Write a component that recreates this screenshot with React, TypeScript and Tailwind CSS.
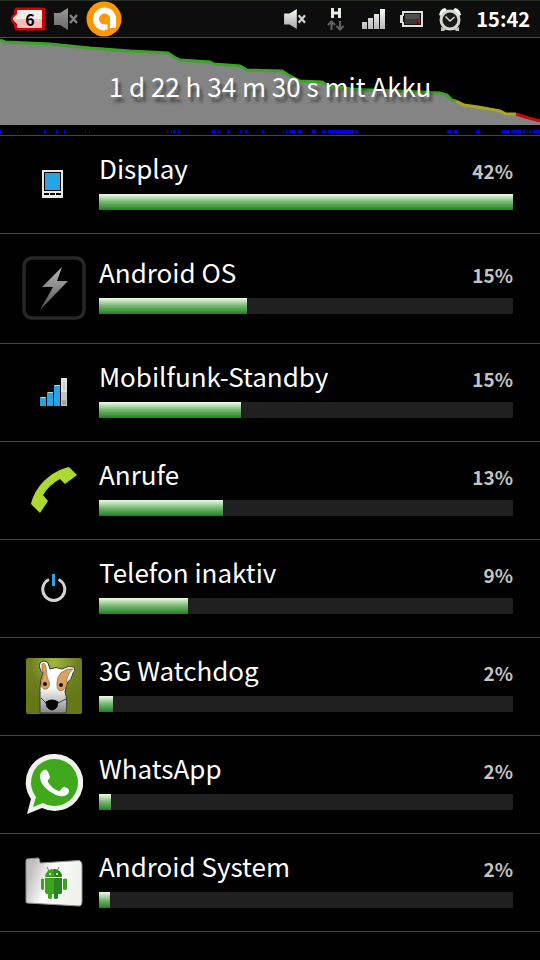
import type { ReactNode } from "react";

const FONT = "font-['Noto_Sans_CJK_SC','Noto_Sans',sans-serif]";

function MutedIcon({ className, id }: { className: string; id: string }) {
  return (
    <svg viewBox="0 0 24 22" className={className} aria-hidden="true">
      <defs>
        <linearGradient id={id} x1="0" y1="0" x2="0" y2="1">
          <stop offset="0" stopColor="#f4f8f0" />
          <stop offset="1" stopColor="#a8a8a8" />
        </linearGradient>
      </defs>
      <path d="M0 5h6l8-5v22l-8-5H0z" fill={`url(#${id})`} />
      <path d="M16 7l7 8M23 7l-7 8" stroke="#d0d0d0" strokeWidth="2.500" />
    </svg>
  );
}

function StatusBar() {
  return (
    <header className="flex h-[38px] items-center justify-between border-t border-b border-t-[#242c24] border-b-[#4a4a4a] bg-[#0d0d0d] px-[10px]">
      <div className="flex items-center">
        <div className="grid h-7 w-9 items-center">
          <svg viewBox="0 0 36 24" className="col-start-1 row-start-1 h-6 w-9" aria-hidden="true">
            <path d="M7 0.500h26q2.500 0 2.500 2.500v18q0 2.500-2.500 2.500H7q-2 0-3-3v-3L1 14v-4l3-3.500v-3q1-3 3-3z" fill="#c80404" />
            <path d="M8 3h23q1 0 1 1v8H3V11l4-4V4z" fill="#eceee8" />
            <path d="M3 12h29v8q0 1-1 1H8l-1-1v-3l-4-4z" fill="#ffbcbc" />
          </svg>
          <span className="col-start-1 row-start-1 pl-1 text-center text-base leading-7 font-bold text-black">6</span>
        </div>
        <MutedIcon id="muteLeft" className="ml-2 h-[22px] w-6 opacity-60" />
        <svg viewBox="0 0 36 36" className="ml-2 h-9 w-9" aria-hidden="true">
          <circle cx="18" cy="18" r="17.500" fill="#ff9804" />
          <path d="M19 26.500A8.500 8.500 0 1 1 27 18V27" fill="none" stroke="#fff" strokeWidth="6" />
          <path d="M18 23.500h3.500v5H18z" fill="#fff" />
          <circle cx="19" cy="18" r="5" fill="#ff9804" />
        </svg>
      </div>
      <div className="flex items-center">
        <MutedIcon id="muteRight" className="h-5 w-6" />
        <svg viewBox="0 0 18 24" className="ml-5 h-6 w-[18px]" aria-hidden="true">
          <path d="M5.500 1v10M12.500 1v10M5 6h7" stroke="#e8ece4" strokeWidth="3" fill="none" />
          <path d="M4.500 23v-8M1 18l3.500-3.500L8 18M13 14v8M9.500 19l3.500 3.500 3.500-3.500" stroke="#626262" strokeWidth="2" fill="none" />
        </svg>
        <svg viewBox="0 0 24 20" className="ml-[17px] h-5 w-6" aria-hidden="true">
          <defs>
            <linearGradient id="bars" x1="0" y1="0" x2="0" y2="1">
              <stop offset="0" stopColor="#f6faf2" />
              <stop offset="1" stopColor="#b8b8b8" />
            </linearGradient>
          </defs>
          <path d="M0 13h5v7H0zM6 9h5v11H6zM12 5h5v15h-5zM18 0h5v20h-5z" fill="url(#bars)" />
        </svg>
        <svg viewBox="0 0 24 18" className="ml-[14px] h-[18px] w-6" aria-hidden="true">
          <path d="M2 1h21v16H2v-4H0V5h2z" fill="#dce0d8" />
          <path d="M4 3h17v12H4v-3H3V6h1z" fill="#141414" />
          <path d="M5 4h14v5H5z" fill="#505050" />
          <path d="M5 9h12v5H5z" fill="#383838" />
          <path d="M19 4h1v10h-1l-2-3 2-2z" fill="#c01010" />
        </svg>
        <svg viewBox="0 0 24 24" className="ml-[14px] h-6 w-6" aria-hidden="true">
          <path d="M1 8Q2 2 7 1l2 2-6 6zM23 8q-1-6-6-7l-2 2 6 6z" fill="#f4f8f0" />
          <path d="M3 20v4h3l2-2zM21 20v4h-3l-2-2z" fill="#c0c4bc" />
          <circle cx="12" cy="13" r="9" fill="#1a1a1a" stroke="#d4d8d0" strokeWidth="3" />
          <path d="M7.500 9.500L12 14l4.500-4" stroke="#d8d8d8" strokeWidth="1.500" fill="none" />
        </svg>
        <time className="ml-3.5 text-xl leading-6 font-bold text-white">15:42</time>
      </div>
    </header>
  );
}

const GREEN = "0,2 5,4 50,6 70,8 90,10 130,13 168,15 174,19 180,22 210,24 214,26 240,28 247,32 282,33 290,38 300,43 322,44 330,49 340,49 350,51 370,52 400,53 440,55 447,57 452,62 456,63";
const YELLOW = "456,63 464,67 478,69 500,73 506,76 516,76";
const RED = "516,76 525,79 540,83";

/* start and length of each period of use along the time line */
const ACTIVE: [number, number][] = [
  [0, 1], [17, 1], [44, 2], [56, 1], [64, 1], [85, 1], [89, 1], [167, 1], [171, 1], [173, 3],
  [178, 1], [212, 3], [218, 1], [228, 1], [240, 1], [245, 2], [262, 1], [283, 1], [286, 1],
  [289, 6], [298, 4], [312, 4], [322, 1], [324, 2], [328, 11], [340, 14], [355, 2], [447, 5],
  [454, 4], [476, 1], [478, 1], [501, 2], [504, 6], [511, 10], [523, 2], [527, 1], [529, 2], [533, 7],
];

function BatteryHistory() {
  return (
    <section className="relative h-[98px] border-b border-[#444]">
      <svg viewBox="0 0 540 97" preserveAspectRatio="none" className="h-[97px] w-full" aria-hidden="true">
        <polygon points={`${GREEN} ${YELLOW} ${RED} 540,87 0,87`} fill="#848484" />
        <g fill="none" strokeWidth="3">
          <polyline points={GREEN} stroke="#3ca428" />
          <polyline points={YELLOW} stroke="#a8a820" />
          <polyline points={RED} stroke="#d00808" />
        </g>
        {ACTIVE.map(([x, w]) => (
          <rect key={x} x={x} y="92" width={w} height="3" fill="#0000f4" />
        ))}
      </svg>
      <h1 className="absolute inset-x-0 top-8 text-center text-[26px] leading-8 font-normal text-white [text-shadow:3px_5px_3px_rgba(0,0,0,0.45)]">
        1 d 22 h 34 m 30 s mit Akku
      </h1>
    </section>
  );
}

const displayIcon = (
  <svg viewBox="0 0 21 28" className="mr-[3px] h-7 w-[21px]" aria-hidden="true">
    <path d="M0 0h21v28H0z" fill="#e8e8e4" />
    <path d="M2 2h17v19H2z" fill="#000" />
    <path d="M3 3h15v17H3z" fill="#28a4e0" />
    <path d="M2 23h5v2H2zM8 23h5v2H8zM14 23h5v2h-5z" fill="#000" />
  </svg>
);

const boltIcon = (
  <svg viewBox="0 0 64 64" className="h-16 w-16" aria-hidden="true">
    <defs>
      <linearGradient id="bolt" x1="0" y1="0" x2="0" y2="1">
        <stop offset="0" stopColor="#b8b8b8" />
        <stop offset="0.400" stopColor="#909090" />
        <stop offset="1" stopColor="#505050" />
      </linearGradient>
    </defs>
    <rect x="2" y="2" width="60" height="60" rx="8" fill="#000" stroke="#242826" strokeWidth="3.500" />
    <path d="M40 11L20 31h11L18 54 46 25H35z" fill="url(#bolt)" />
  </svg>
);

const cellIcon = (
  <svg viewBox="0 0 28 28" className="h-7 w-7" aria-hidden="true">
    <path d="M0 19h6v9H0zM7 14h6v14H7zM14 7h6v21h-6z" fill="#28a4e0" />
    <path d="M1 19h5v1H1zM8 14h5v1H8zM15 7h5v1h-5z" fill="#c8d0d4" />
    <path d="M21 0h6v28h-6z" fill="#e4e4de" />
    <path d="M21 14h6v14h-6z" fill="#c4c4c4" />
    <path d="M23 4h2v9h-2z" fill="#ccc" />
    <path d="M22 22h4v5h-4z" fill="#a4a4a4" />
  </svg>
);

const callIcon = (
  <svg viewBox="0 0 46 46" className="h-[46px] w-[46px]" aria-hidden="true">
    <path d="M38 0L46 8 34 17 29 12Q18 18 12 28L17 34 9 46 0 37C4 20 18 5 38 0z" fill="#acd830" />
  </svg>
);

const powerIcon = (
  <svg viewBox="0 0 26 28" className="h-7 w-[26px]" aria-hidden="true">
    <path d="M8 5.500A11 11 0 1 0 17.500 5.500" fill="none" stroke="#d4d4d4" strokeWidth="3" />
    <path d="M11 0h3v12h-3z" fill="#28a4e0" />
  </svg>
);

const dogIcon = (
  <svg viewBox="0 0 56 56" className="h-14 w-14" aria-hidden="true">
    <defs>
      <radialGradient id="grass" cx="0.500" cy="0.100" r="0.700">
        <stop offset="0" stopColor="#a0b83c" />
        <stop offset="0.600" stopColor="#708020" />
        <stop offset="1" stopColor="#647818" />
      </radialGradient>
      <linearGradient id="fur" x1="0" y1="0" x2="0" y2="1">
        <stop offset="0.500" stopColor="#fff" />
        <stop offset="1" stopColor="#888" />
      </linearGradient>
    </defs>
    <rect width="56" height="56" rx="2" fill="url(#grass)" />
    <path d="M14 55V30Q14 22 17 15 12 10 14 5 18 1 22 5L24 11Q30 8 36 11 43 7 48 9 50 13 47 15 46 21 41 25L39 34Q42 42 40 55z" fill="url(#fur)" stroke="#343830" strokeWidth="1" />
    <path d="M16 6q3-2 4 3l1 8q0 3 2 6 2 5-2 8-5 1-6-4 0-6 3-11-3-5-2-10zM36 14q5-4 11-3-4 3-6 10 1 11-7 12-4-2-3-9 0-6 5-10z" fill="#dca060" stroke="#604828" strokeWidth="0.500" />
    <circle cx="19" cy="26" r="2" fill="#101010" />
    <circle cx="35" cy="27" r="2" fill="#101010" />
    <path d="M15 40l5 5M32 45l8-4" fill="none" stroke="#404040" strokeWidth="1" />
    <path d="M20 44q6-4 12 0l-1 5q-5 6-10 0z" fill="#080808" stroke="#080808" strokeWidth="1" />
  </svg>
);

const whatsAppIcon = (
  <svg viewBox="0 0 58 60" className="h-[60px] w-[58px]" aria-hidden="true">
    <path d="M29 0A28.500 28.500 0 1 1 17 54L2 60 6 45A28.500 28.500 0 0 1 29 0z" fill="#f0f2ee" />
    <path d="M29 5A23.500 23.500 0 1 1 18 49L8 53 11 43A23.500 23.500 0 0 1 29 5z" fill="#40a81c" />
    <path d="M19 16c3-1 4 1 6 7 0 2-3 3-2 5 3 5 7 8 11 9 2 0 3-4 5-4 3 0 6 3 5 5-2 5-8 5-13 3C22 37 15 30 15 22c0-3 2-5 4-6z" fill="#fff" />
  </svg>
);

const folderIcon = (
  <svg viewBox="0 0 58 50" className="h-[50px] w-[58px]" aria-hidden="true">
    <defs>
      <linearGradient id="folder" x1="0" y1="0" x2="1" y2="0.300">
        <stop offset="0.150" stopColor="#c0c0c0" />
        <stop offset="0.500" stopColor="#fcfcfc" />
        <stop offset="1" stopColor="#eef2ea" />
      </linearGradient>
    </defs>
    <path d="M2 2L13 1Q15 1 15 6L54 3.500Q57 4 57 8V44Q57 49 54 49L2 46Q1 46 1 44V4Q1 2 2 2z" fill="url(#folder)" stroke="#909090" strokeWidth="1" />
    <path d="M20 20a8.500 8 0 0 1 17 0zM20 21h17v14q0 2-2 2h-2v4q-2 2-4 0v-4h-2v4q-2 2-4 0v-4h-1q-2 0-2-2z" fill="#3ca41c" />
    <path d="M29 12q8 1 8 8h-8zM29 21h8v14q0 2-2 2h-2v4q-2 2-4 0z" fill="#2c8420" />
    <path d="M16 22q2-1 3 0v10q-1 2-3 0zM38 22q2-1 4 0v10q-2 2-4 0z" fill="#3ca41c" />
    <path d="M22 10l2 4M34 10l-2 4" stroke="#3ca41c" strokeWidth="1" />
    <circle cx="25" cy="17" r="1" fill="#fff" />
    <circle cx="32" cy="17" r="1" fill="#fff" />
  </svg>
);

type Usage = { name: string; percent: number; fill: number; icon: ReactNode; tall?: boolean };

const USAGE: Usage[] = [
  { name: "Display", percent: 42, fill: 100, icon: displayIcon },
  { name: "Android OS", percent: 15, fill: 35.8, icon: boltIcon, tall: true },
  { name: "Mobilfunk-Standby", percent: 15, fill: 34.3, icon: cellIcon },
  { name: "Anrufe", percent: 13, fill: 30, icon: callIcon },
  { name: "Telefon inaktiv", percent: 9, fill: 21.5, icon: powerIcon },
  { name: "3G Watchdog", percent: 2, fill: 3.4, icon: dogIcon },
  { name: "WhatsApp", percent: 2, fill: 2.9, icon: whatsAppIcon },
  { name: "Android System", percent: 2, fill: 2.7, icon: folderIcon },
];

function UsageRow({ name, percent, fill, icon, tall }: Usage) {
  return (
    <li className={`flex items-center gap-[13px] border-b border-[#444] pr-[27px] pl-[22px] ${tall ? "py-5" : "py-3.5"}`}>
      <div className="flex w-16 shrink-0 justify-center pb-0.5">{icon}</div>
      <div className="min-w-0 flex-1 pb-[9px]">
        <div className="mb-2 flex items-center justify-between">
          <h2 className="text-[26px] leading-9 font-normal text-white">{name}</h2>
          <span className="pt-1.5 text-[19px] leading-[30px] font-bold text-[#c4c4c4]">{percent}%</span>
        </div>
        <div className="h-4 bg-[#202020]">
          <div
            className="h-4 bg-linear-to-b from-[#f0fce8] via-[#74b870] to-[#188018]"
            style={{ width: `${fill}%` }}
          />
        </div>
      </div>
    </li>
  );
}

export default function App() {
  return (
    <main className={`min-h-screen bg-black ${FONT}`}>
      <StatusBar />
      <BatteryHistory />
      <ul>
        {USAGE.map((item) => (
          <UsageRow key={item.name} {...item} />
        ))}
      </ul>
    </main>
  );
}
